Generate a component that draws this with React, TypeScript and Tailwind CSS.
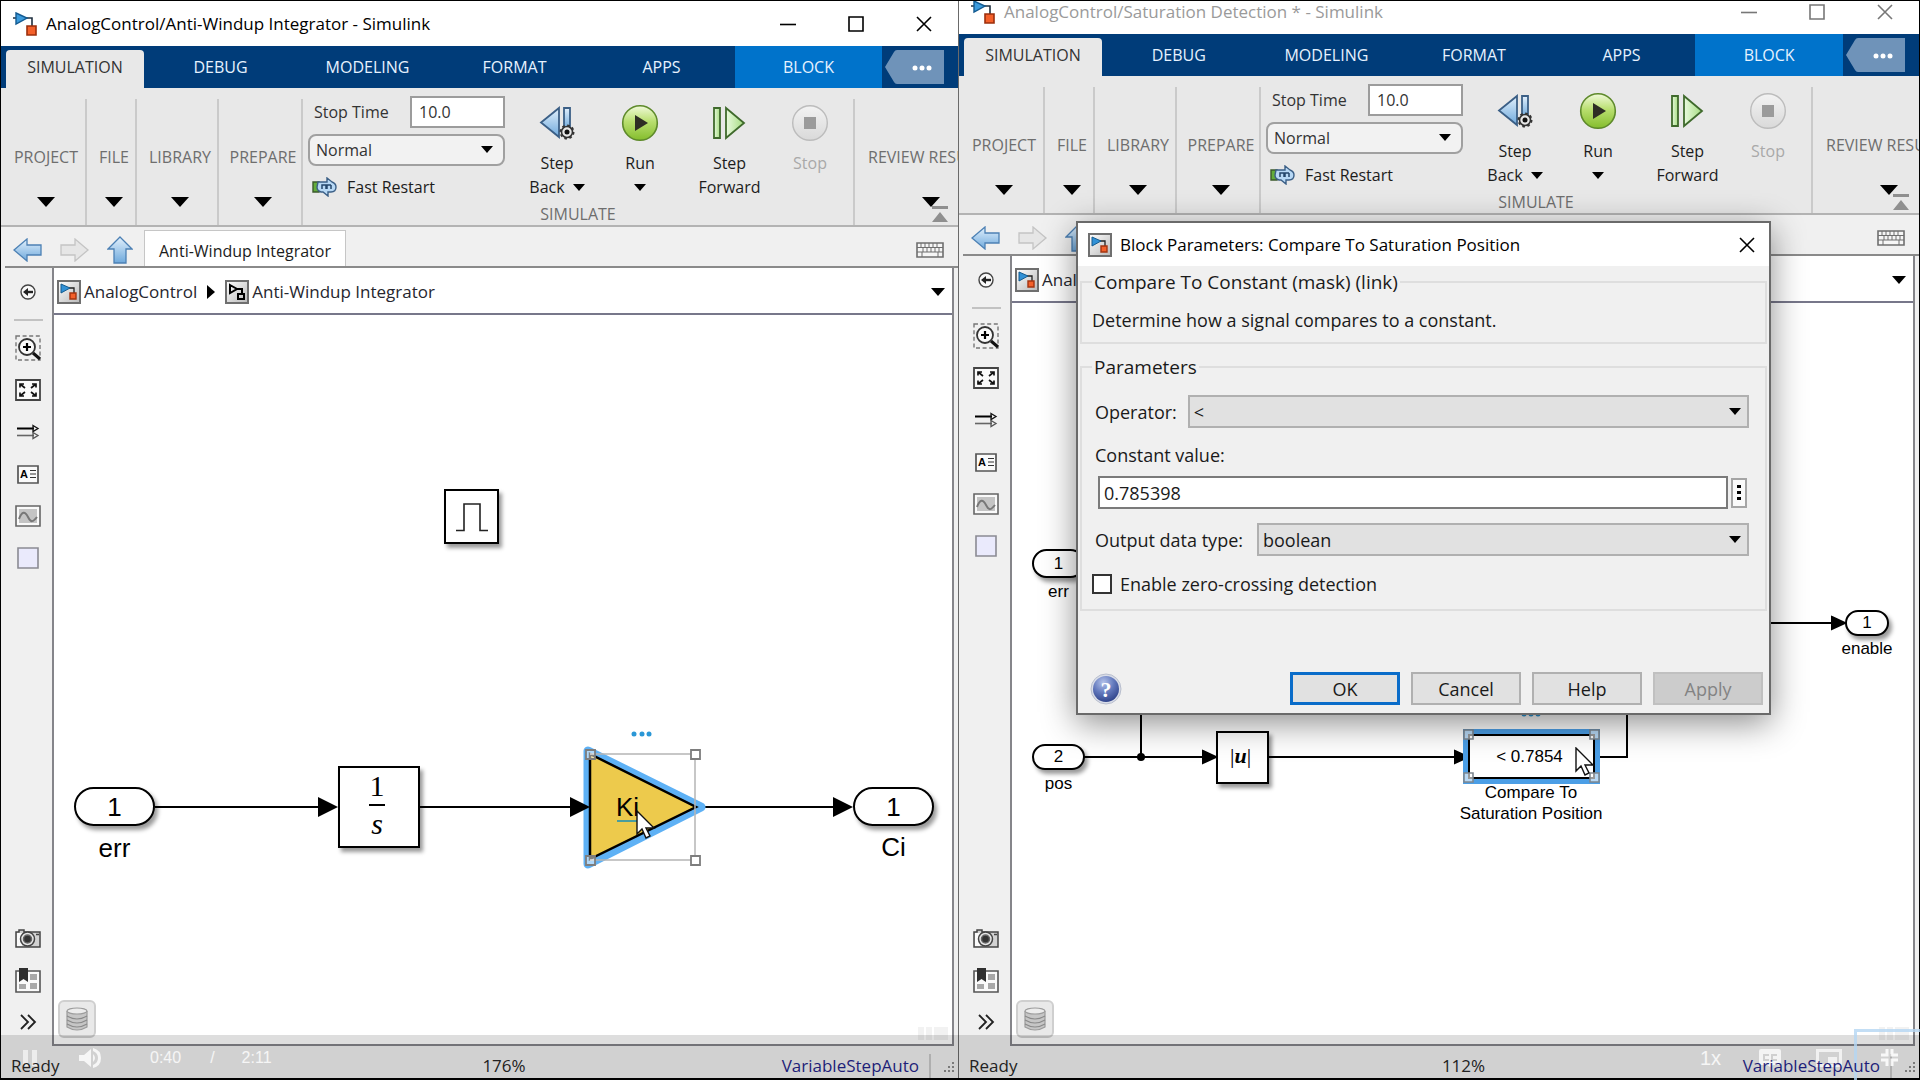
import type { ReactNode } from "react";

const UI = "font-['Open_Sans','Noto_Sans',sans-serif]";
const ARIAL = "font-['Liberation_Sans',Arial,sans-serif]";
const TIMES = "font-['Liberation_Serif','Times_New_Roman',serif]";

const TABS = ["DEBUG", "MODELING", "FORMAT", "APPS"];

/* ---------- icons ---------- */

function Gradients() {
  return (
    <svg className="absolute h-0 w-0" aria-hidden="true">
      <defs>
        <linearGradient id="blue" x1="0" y1="0" x2="0" y2="1">
          <stop offset="0" stopColor="#e2f0fc" />
          <stop offset="1" stopColor="#6ea9dc" />
        </linearGradient>
        <linearGradient id="grey" x1="0" y1="0" x2="0" y2="1">
          <stop offset="0" stopColor="#f3f3f3" />
          <stop offset="1" stopColor="#d9d9d9" />
        </linearGradient>
        <linearGradient id="green" x1="0" y1="0" x2="0" y2="1">
          <stop offset="0" stopColor="#f1fadb" />
          <stop offset="0.45" stopColor="#b9df70" />
          <stop offset="1" stopColor="#84bd2c" />
        </linearGradient>
        <linearGradient id="paleGreen" x1="0" y1="0" x2="1" y2="0">
          <stop offset="0" stopColor="#e9fadf" />
          <stop offset="1" stopColor="#a5dc80" />
        </linearGradient>
        <linearGradient id="box" x1="0" y1="0" x2="1" y2="1">
          <stop offset="0" stopColor="#ffffff" />
          <stop offset="1" stopColor="#b9b9b9" />
        </linearGradient>
        <radialGradient id="help" cx="0.4" cy="0.25" r="0.8">
          <stop offset="0" stopColor="#b4c3ea" />
          <stop offset="0.5" stopColor="#6379bd" />
          <stop offset="1" stopColor="#2b3f86" />
        </radialGradient>
      </defs>
    </svg>
  );
}

function SimulinkIcon() {
  return (
    <svg width="24" height="24" viewBox="0 0 24 24">
      <path d="M0 6h4M13 6h6v8" fill="none" stroke="#1f2f3f" strokeWidth="1.6" />
      <path d="M3 1l11 5-11 6z" fill="#3c9bdc" stroke="#125a91" strokeWidth="1.4" />
      <path d="M14 14h9v9h-9z" fill="#f4602a" stroke="#9c2f0c" strokeWidth="1.6" />
    </svg>
  );
}

function ModelIcon() {
  return (
    <svg width="24" height="24" viewBox="0 0 24 24" className="shrink-0">
      <path d="M1 1h22v22H1z" fill="url(#box)" stroke="#6f6f6f" strokeWidth="2" />
      <path d="M12 8h5v5" fill="none" stroke="#222" strokeWidth="1.3" />
      <path d="M4 4l9 4-9 5z" fill="#3191d6" stroke="#155b8e" />
      <path d="M13 13h6v6h-6z" fill="#f4602a" stroke="#a33410" strokeWidth="1.4" />
    </svg>
  );
}

function SubsystemIcon() {
  return (
    <svg width="24" height="24" viewBox="0 0 24 24" className="shrink-0">
      <path d="M1 1h22v22H1z" fill="url(#box)" stroke="#6f6f6f" strokeWidth="2" />
      <path d="M12 9h5v5M5 5l7 4-7 4zM13 14h6v5h-6z" fill="none" stroke="#000" strokeWidth="2" />
    </svg>
  );
}

function Caret({ small = false }: { small?: boolean }) {
  return small ? (
    <svg width="12" height="7" viewBox="0 0 12 7" className="shrink-0">
      <path d="M0 0h12L6 7z" />
    </svg>
  ) : (
    <svg width="18" height="10" viewBox="0 0 18 10" className="shrink-0">
      <path d="M0 0h18L9 10z" />
    </svg>
  );
}

function StepBackIcon() {
  return (
    <svg width="36" height="36" viewBox="0 0 36 36">
      <path d="M20 3v29L2 17.500z" fill="url(#blue)" stroke="#3b5f86" strokeWidth="1.8" />
      <path d="M25 3h6v21h-6z" fill="url(#blue)" stroke="#3b5f86" strokeWidth="1.8" />
      <circle cx="28" cy="27" r="5.500" fill="#e8e8e8" stroke="#333" strokeWidth="1.600" />
      <circle cx="28" cy="27" r="6.600" fill="none" stroke="#333" strokeWidth="1.800" strokeDasharray="2.600 2.580" />
      <circle cx="28" cy="27" r="2.500" fill="#111" />
    </svg>
  );
}

function RunIcon() {
  return (
    <svg width="38" height="38" viewBox="0 0 38 38">
      <circle cx="19" cy="19" r="17.300" fill="url(#green)" stroke="#5e8a2b" strokeWidth="1.600" />
      <path d="M14 11l13 8-13 8z" fill="#2d2d24" />
    </svg>
  );
}

function StepForwardIcon() {
  return (
    <svg width="34" height="36" viewBox="0 0 34 36">
      <path d="M1 3h6v30H1z" fill="url(#paleGreen)" stroke="#3f6a2c" strokeWidth="1.800" />
      <path d="M13 3v30l18-15z" fill="url(#paleGreen)" stroke="#3f6a2c" strokeWidth="1.800" />
    </svg>
  );
}

function StopIcon() {
  return (
    <svg width="38" height="38" viewBox="0 0 38 38">
      <circle cx="19" cy="19" r="17.300" fill="url(#grey)" stroke="#bcbcbc" strokeWidth="1.400" />
      <path d="M13 13h12v12H13z" fill="#9b9b9b" />
    </svg>
  );
}

function RestartIcon() {
  return (
    <svg width="25" height="20" viewBox="0 0 25 20">
      <path d="M1 5h6v10H1z" fill="#63ad3b" stroke="#3b5a2c" strokeWidth="1.400" />
      <path d="M6 5h9V1l5 4c3 1 4 3 4 5 0 3-2 5-5 5h-3v4l-5-4H9c-3-1-4-3-4-5z" fill="#b7d8f5" stroke="#3b5f86" strokeWidth="1.400" />
      <path d="M10 12V8h4v4M15 12V8h4M19 8v4" fill="none" stroke="#24466b" strokeWidth="1.500" />
    </svg>
  );
}

function Arrow({ dir }: { dir: "left" | "right" | "up" }) {
  if (dir === "up") {
    return (
      <svg width="26" height="28" viewBox="0 0 26 28">
        <path d="M13 1l12 12h-6v14H7V13H1z" fill="url(#blue)" stroke="#4c80b4" strokeWidth="1.300" />
      </svg>
    );
  }
  return dir === "left" ? (
    <svg width="29" height="24" viewBox="0 0 29 24">
      <path d="M1 12L14 1v6h14v10H14v6z" fill="url(#blue)" stroke="#4c80b4" strokeWidth="1.300" />
    </svg>
  ) : (
    <svg width="29" height="24" viewBox="0 0 29 24">
      <path d="M28 12L15 1v6H1v10h14v6z" fill="#e6e6e6" stroke="#c4c4c4" strokeWidth="1.300" />
    </svg>
  );
}

function KeyboardIcon() {
  return (
    <svg width="28" height="16" viewBox="0 0 28 16" fill="none" stroke="#6f6f6f">
      <path d="M1 1h26v14H1z" strokeWidth="1.600" fill="#f6f6f6" />
      <path d="M1 5.500h26M1 10h26" />
      <path d="M5 1v4M9 1v4M13 1v4M17 1v4M21 1v4M7 5v5M11 5v5M15 5v5M19 5v5M23 5v5M6 10v5M22 10v5" />
    </svg>
  );
}

const SIDE_TOP: { name: string; icon: ReactNode }[] = [
  {
    name: "Zoom in",
    icon: (
      <svg width="26" height="26" viewBox="0 0 26 26" fill="none">
        <path d="M1 1h24v24H1z" stroke="#777" strokeWidth="1.400" strokeDasharray="4 2.600" />
        <path d="M18 18l7 6" stroke="#111" strokeWidth="3" />
        <circle cx="12" cy="12" r="8" fill="#fafafa" stroke="#333" strokeWidth="1.800" />
        <path d="M12 8v8M8 12h8" stroke="#000" strokeWidth="2.200" />
      </svg>
    ),
  },
  {
    name: "Fit to view",
    icon: (
      <svg width="26" height="22" viewBox="0 0 26 22" fill="none">
        <path d="M1 1h24v20H1z" fill="#fafafa" stroke="#444" strokeWidth="1.800" />
        <path d="M5 8.500V5h4M5 5l5 4M21 8.500V5h-4M21 5l-5 4M5 13.500V17h4M5 17l5-4M21 13.500V17h-4M21 17l-5-4" stroke="#111" strokeWidth="1.700" />
      </svg>
    ),
  },
  {
    name: "Signals",
    icon: (
      <svg width="24" height="16" viewBox="0 0 24 16" fill="none">
        <path d="M1 4.500h17" stroke="#000" strokeWidth="2" />
        <path d="M17 1.500l5 3-5 3z" stroke="#111" strokeWidth="1.300" />
        <path d="M1 11.500h17" stroke="#666" strokeWidth="1.600" />
        <path d="M17 8.500l5 3-5 3z" stroke="#555" strokeWidth="1.300" />
      </svg>
    ),
  },
  {
    name: "Annotation",
    icon: (
      <svg width="22" height="19" viewBox="0 0 22 19" fill="none">
        <path d="M1 1h20v17H1z" fill="#fafafa" stroke="#555" strokeWidth="1.700" />
        <path d="M13 5.500h6M13 9h6M13 12.500h6" stroke="#333" strokeWidth="1.200" />
        <text x="3" y="13" fontSize="11" fontWeight="700" fill="#000" fontFamily="Liberation Sans">A</text>
      </svg>
    ),
  },
  {
    name: "Image",
    icon: (
      <svg width="26" height="22" viewBox="0 0 26 22" fill="none">
        <path d="M1 1h24v20H1z" fill="#fafafa" stroke="#666" strokeWidth="1.600" />
        <path d="M4 4h18v14H4z" fill="#c4c4c4" />
        <path d="M4 14c3-8 6-8 9-2s5 5 9 0" stroke="#777" strokeWidth="2" />
      </svg>
    ),
  },
  {
    name: "Area",
    icon: (
      <svg width="22" height="22" viewBox="0 0 22 22">
        <path d="M1 1h20v20H1z" fill="#eaeafc" stroke="#8b8b93" strokeWidth="1.600" />
      </svg>
    ),
  },
];

const SIDE_BOTTOM: { name: string; icon: ReactNode }[] = [
  {
    name: "Screenshot",
    icon: (
      <svg width="26" height="20" viewBox="0 0 26 20" fill="none">
        <path d="M1 4h3V2h5v2h16v15H1z" fill="#d2d2d2" stroke="#444" strokeWidth="1.500" />
        <path d="M2 5h5v13H2z" fill="#fafafa" />
        <circle cx="12.500" cy="11" r="7" fill="#e6e6e6" stroke="#444" strokeWidth="1.500" />
        <circle cx="12.500" cy="11" r="4" fill="#333" stroke="#666" strokeWidth="1.500" />
        <path d="M21 6.500h3" stroke="#444" strokeWidth="1.500" />
      </svg>
    ),
  },
  {
    name: "Bookmarks",
    icon: (
      <svg width="26" height="26" viewBox="0 0 26 26" fill="none">
        <path d="M1 4h24v21H1z" fill="#fafafa" stroke="#555" strokeWidth="1.600" />
        <path d="M15 7h7v6h-7zM4 17h7v5H4zM15 16h7v6h-7z" fill="#a8a8a8" />
        <path d="M4 1h9v14l-4.500-3L4 15z" fill="#2f2f2f" />
      </svg>
    ),
  },
  {
    name: "More",
    icon: (
      <svg width="18" height="16" viewBox="0 0 18 16" fill="none" stroke="#222" strokeWidth="1.800">
        <path d="M2 1l7 7-7 7M9 1l7 7-7 7" />
      </svg>
    ),
  },
];

function WindowButtons({ active }: { active: boolean }) {
  const color = active ? "#000" : "#777";
  return (
    <div className="ml-auto flex items-center gap-[52px] pr-[26px]">
      <button aria-label="Minimize">
        <svg width="16" height="16" viewBox="0 0 16 16" stroke={color} strokeWidth="1.600">
          <path d="M0 8.500h16" />
        </svg>
      </button>
      <button aria-label="Maximize">
        <svg width="16" height="16" viewBox="0 0 16 16" stroke={color} strokeWidth="1.600" fill="none">
          <path d="M1 1h14v14H1z" />
        </svg>
      </button>
      <button aria-label="Close">
        <svg width="16" height="16" viewBox="0 0 16 16" stroke={color} strokeWidth="1.600">
          <path d="M1 1l14 14M15 1L1 15" />
        </svg>
      </button>
    </div>
  );
}

/* ---------- window parts ---------- */

function TabBar() {
  return (
    <nav className="flex h-[42px] shrink-0 items-stretch bg-[#003c79] pl-[5px] text-base font-medium text-[#e6f2ff]">
      <button className="mt-1 mr-[3px] w-[138px] shrink-0 rounded-t-sm bg-[#e8e8e8] pb-1 font-normal text-[#333]">
        SIMULATION
      </button>
      {TABS.map((tab) => (
        <button key={tab} className="flex-1">
          {tab}
        </button>
      ))}
      <button className="flex-1 bg-[#0073cb]">BLOCK</button>
      <button aria-label="More tabs" className="flex w-[76px] shrink-0 items-center pl-[3px]">
        <svg width="59" height="34" viewBox="0 0 59 34">
          <path d="M0 17L9 2q1-2 3-2h47v34H12q-2 0-3-2z" fill="#6f93b9" />
          <circle cx="30" cy="18" r="2.500" fill="#fff" />
          <circle cx="37" cy="18" r="2.500" fill="#fff" />
          <circle cx="44" cy="18" r="2.500" fill="#fff" />
        </svg>
      </button>
    </nav>
  );
}

function Section({ label, className }: { label: string; className: string }) {
  return (
    <button
      className={`flex h-[126px] shrink-0 flex-col items-center justify-end gap-[28px] pb-[18px] text-base leading-6 whitespace-nowrap text-[#6e6e6e] ${className}`}
    >
      {label}
      <span className="text-black">
        <Caret />
      </span>
    </button>
  );
}

function RibbonButton({ icon, className, children }: { icon: ReactNode; className: string; children: ReactNode }) {
  return (
    <button className={`flex flex-col items-center text-base leading-6 text-[#1c1c1c] ${className}`}>
      <span className="flex h-[42px] items-center">{icon}</span>
      {children}
    </button>
  );
}

function Ribbon({ id }: { id: string }) {
  return (
    <div className="relative flex h-[139px] shrink-0 items-end overflow-hidden border-b-2 border-[#b3b3b3] bg-[#e8e8e8]">
      <Section label="PROJECT" className="w-[86px] border-r-2 border-[#cacaca] pl-[6px]" />
      <Section label="FILE" className="w-[50px] border-r-2 border-[#cacaca] pl-[6px]" />
      <Section label="LIBRARY" className="w-[82px] border-r-2 border-[#cacaca] pl-[6px]" />
      <Section label="PREPARE" className="w-[84px] border-r-2 border-[#cacaca] pl-[6px]" />
      <div className="flex h-[137px] w-[550px] shrink-0 flex-col">
        <div className="flex flex-1 pt-2 pl-[5px]">
          <div className="flex w-[197px] flex-col gap-[6px] text-base text-[#333]">
            <div className="flex h-8 items-center justify-between">
              <label htmlFor={`${id}-stop`} className="pl-[6px]">
                Stop Time
              </label>
              <input
                id={`${id}-stop`}
                defaultValue="10.0"
                className="h-8 w-[95px] border-2 border-[#9c9c9c] bg-white pl-[7px]"
              />
            </div>
            <div className="relative">
              <select
                aria-label="Simulation mode"
                className="h-8 w-full appearance-none rounded-lg border-2 border-[#a0a0a0] bg-[#f2f2f2] pl-[6px]"
              >
                <option>Normal</option>
              </select>
              <span className="pointer-events-none absolute top-3 right-3">
                <Caret small />
              </span>
            </div>
            <button className="flex h-[30px] items-center gap-[10px] pl-1 text-[#1c1c1c]">
              <RestartIcon />
              Fast Restart
            </button>
          </div>
          <div className="flex pt-[6px] pl-[11px]">
            <RibbonButton icon={<StepBackIcon />} className="w-[82px]">
              <span className="pt-[7px]">Step</span>
              <span className="flex items-center gap-2">
                Back <Caret small />
              </span>
            </RibbonButton>
            <RibbonButton icon={<RunIcon />} className="w-[84px]">
              <span className="pt-[7px]">Run</span>
              <span className="flex h-6 items-center">
                <Caret small />
              </span>
            </RibbonButton>
            <RibbonButton icon={<StepForwardIcon />} className="w-[95px]">
              <span className="pt-[7px]">Step</span>
              <span>Forward</span>
            </RibbonButton>
            <RibbonButton icon={<StopIcon />} className="w-[66px]">
              <span className="pt-[7px] text-[#a9a9a9]">Stop</span>
            </RibbonButton>
          </div>
        </div>
        <div className="text-center text-base leading-[22px] text-[#6e6e6e]">SIMULATE</div>
      </div>
      <Section label="REVIEW RESULTS" className="border-l-2 border-[#cacaca] pl-[13px]" />
      <button aria-label="Collapse toolstrip" className="absolute right-[10px] bottom-[3px]">
        <svg width="16" height="16" viewBox="0 0 16 16" fill="#8f8f8f">
          <path d="M0 0h16v3H0zM0 16h16L8 6z" />
        </svg>
      </button>
    </div>
  );
}

function Sidebar() {
  return (
    <aside className="flex w-[51px] shrink-0 flex-col items-center pt-[9px] pb-[3px] pl-[3px]">
      <button aria-label="Hide browser" className="flex h-[30px] items-center">
        <svg width="16" height="16" viewBox="0 0 16 16" fill="none">
          <circle cx="8" cy="8" r="7" fill="#fafafa" stroke="#444" strokeWidth="1.400" />
          <path d="M13 8H6" stroke="#222" strokeWidth="2.400" />
          <path d="M3 8l5-4v8z" fill="#222" />
        </svg>
      </button>
      <hr className="mt-3 mb-[6px] w-[29px] border-t-2 border-[#c2c2c2]" />
      {SIDE_TOP.map((item) => (
        <button key={item.name} aria-label={item.name} className="flex h-[42px] items-center">
          {item.icon}
        </button>
      ))}
      <div className="mt-auto flex flex-col items-center">
        {SIDE_BOTTOM.map((item) => (
          <button key={item.name} aria-label={item.name} className="flex h-[42px] items-center">
            {item.icon}
          </button>
        ))}
      </div>
    </aside>
  );
}

interface ModelWindowProps {
  id: string;
  title: string;
  subsystem?: string;
  zoom: string;
  active?: boolean;
  className: string;
  children: ReactNode;
}

function ModelWindow({ id, title, subsystem, zoom, active = false, className, children }: ModelWindowProps) {
  return (
    <section className={`relative flex min-w-0 flex-col overflow-hidden bg-[#f0f0f0] ${className}`}>
      <header
        className={`flex h-[45px] shrink-0 items-center bg-white pl-3 text-[17px] ${active ? "text-black" : "-mt-3 text-[#9a9a9a]"}`}
      >
        <SimulinkIcon />
        <span className="pl-[9px]">{title}</span>
        <WindowButtons active={active} />
      </header>
      <TabBar />
      <Ribbon id={id} />
      <div className="ml-1 flex h-[41px] shrink-0 items-center border-b-2 border-[#8a8a8a] pt-[7px] pl-2">
        <button aria-label="Back">
          <Arrow dir="left" />
        </button>
        <button aria-label="Forward" className="ml-[18px]">
          <Arrow dir="right" />
        </button>
        <button aria-label="Up to parent" className="ml-[18px]">
          <Arrow dir="up" />
        </button>
        {subsystem && (
          <button className="ml-[11px] h-[36px] shrink-0 self-end border border-b-0 border-[#c6c6c6] bg-white px-[14px] pt-[5px] text-base text-[#1c1c1c]">
            {subsystem}
          </button>
        )}
        <button aria-label="Keyboard shortcuts" className="mr-[14px] ml-auto">
          <KeyboardIcon />
        </button>
      </div>
      <div className="flex flex-1">
        <Sidebar />
        <div className="mr-1 flex min-w-0 flex-1 flex-col border-x-2 border-b-2 border-[#85858a] bg-white">
          <div className="flex h-[47px] shrink-0 items-center border-b-2 border-[#77778a] pt-[2px] pl-[3px] text-[17px] text-[#26262e]">
            <ModelIcon />
            <span className="pl-[3px]">AnalogControl</span>
            {subsystem && (
              <>
                <svg width="8" height="14" viewBox="0 0 8 14" className="mx-[10px]">
                  <path d="M0 0l8 7-8 7z" />
                </svg>
                <SubsystemIcon />
                <span className="pl-[3px]">{subsystem}</span>
              </>
            )}
            <button aria-label="Show all" className="mr-[7px] ml-auto">
              <svg width="14" height="8" viewBox="0 0 14 8">
                <path d="M0 0h14L7 8z" />
              </svg>
            </button>
          </div>
          <div className="relative flex-1 overflow-hidden">
            {children}
            <button
              aria-label="Viewmarks"
              className="absolute bottom-[6px] left-1 flex h-[38px] w-[38px] items-center justify-center rounded-md border-2 border-[#cfcfcf] bg-[#e9e9e9]"
            >
              <svg width="22" height="24" viewBox="0 0 22 24" stroke="#9c9c9c" strokeWidth="1.200">
                <path d="M1 4v16q10 6 20 0V4" fill="#c6c6c6" />
                <ellipse cx="11" cy="4" rx="10" ry="3" fill="#ececec" />
                <path d="M1 9q10 6 20 0M1 13q10 6 20 0M1 17q10 6 20 0" fill="none" stroke="#8a8a8a" />
              </svg>
            </button>
            <svg width="32" height="13" viewBox="0 0 32 13" className="absolute right-[2px] bottom-1" fill="#000" fillOpacity="0.05">
              <path d="M0 0h6v13H0zM8 0h6v13H8zM16 0h14v13H16z" />
            </svg>
          </div>
        </div>
      </div>
      <footer className="flex h-8 shrink-0 items-center text-[17px] text-[#222]">
        <span className="relative z-20 flex-1 pt-3 pb-1 pl-[10px]">Ready</span>
        <span className="relative z-20 pt-3 pb-1 pl-[78px]">{zoom}</span>
        <span className="relative z-20 flex-1 pt-3 pr-[10px] pb-1 text-right text-[#1e1e78]">VariableStepAuto</span>
        <span className="h-6 w-[29px] self-end border-l-2 border-[#c9c9c9] pt-2 pl-3">
          <svg width="12" height="12" viewBox="0 0 12 12" fill="#8d8d8d">
            <path d="M9 0h2v2H9zM9 4h2v2H9zM5 4h2v2H5zM9 8h2v2H9zM5 8h2v2H5zM1 8h2v2H1z" />
          </svg>
        </span>
      </footer>
    </section>
  );
}

/* ---------- diagrams ---------- */

function Port({ n, className }: { n: number; className: string }) {
  return (
    <div
      className={`absolute flex items-center justify-center rounded-full border-2 border-black bg-white shadow-[3px_4px_4px_rgba(0,0,0,0.4)] ${className}`}
    >
      {n}
    </div>
  );
}

function Cursor({ className }: { className: string }) {
  return (
    <svg width="20" height="30" viewBox="0 0 20 30" className={`absolute ${className}`}>
      <path d="M1 1v23l5-5 4 9 4-2-4-8h8z" fill="#fff" stroke="#111" strokeWidth="1.400" />
    </svg>
  );
}

function IntegratorDiagram() {
  return (
    <div className={`text-[26px] leading-8 text-black ${ARIAL}`}>
      <svg width="900" height="728" className="absolute top-0 left-0" fill="none" stroke="#000" strokeWidth="2">
        <path d="M101 492h163M365 492h151M643 492h137" />
        <path d="M264 482l20 10-20 10z" fill="#000" stroke="none" />
        <path d="M534 436v113l113-57z" stroke="#5eb1f5" strokeWidth="9" strokeLinejoin="round" />
        <path d="M516 482l20 10-20 10zM779 482l20 10-20 10z" fill="#000" stroke="none" />
        <path d="M536 439v105l106-52z" fill="#edca4c" strokeWidth="2.500" />
        <path d="M536 439h105v106H536" stroke="#b5b5b5" strokeWidth="1.500" />
        <g stroke="#7d7d7d" strokeWidth="1.800" fill="#fff">
          <path d="M532 435h9v9h-9zM532 541h9v9h-9z" fillOpacity="0.5" />
          <path d="M637 435h9v9h-9zM637 541h9v9h-9z" />
        </g>
        <path d="M563 506h21" stroke="#4a9d9d" />
        <g fill="#2a97d6" stroke="none">
          <circle cx="580" cy="419" r="2.500" />
          <circle cx="588" cy="419" r="2.500" />
          <circle cx="595" cy="419" r="2.500" />
        </g>
      </svg>
      <Port n={1} className="top-[472px] left-5 h-[39px] w-[81px]" />
      <span className="absolute top-[517px] left-5 w-[81px] text-center">err</span>
      <div
        className={`absolute top-[451px] left-[284px] flex h-[82px] w-[82px] flex-col items-center justify-center border-2 border-black bg-white pr-1 pb-1 text-[30px] shadow-[3px_4px_4px_rgba(0,0,0,0.4)] ${TIMES}`}
      >
        <span>1</span>
        <span className="my-[2px] h-[2px] w-4 bg-black" />
        <i>s</i>
      </div>
      <div className="absolute top-[174px] left-[390px] flex h-[55px] w-[55px] items-center justify-center border-2 border-black bg-white shadow-[3px_4px_4px_rgba(0,0,0,0.4)]">
        <svg width="32" height="30" viewBox="0 0 32 30" fill="none" stroke="#222" strokeWidth="1.600">
          <path d="M0 28.500h8V2h16v26.500h8" />
        </svg>
      </div>
      <span className="absolute top-[476px] left-[562px]">Ki</span>
      <Port n={1} className="top-[472px] left-[799px] h-[39px] w-[81px]" />
      <span className="absolute top-[516px] left-[799px] w-[81px] text-center">Ci</span>
      <Cursor className="top-[495px] left-[582px]" />
    </div>
  );
}

function SaturationDiagram() {
  return (
    <div className={`text-[17px] leading-5 text-black ${ARIAL}`}>
      <svg width="902" height="740" className="absolute top-0 left-0" fill="none" stroke="#000" strokeWidth="2">
        <path d="M72 454h119M256 454h187M584 454h31V400M129 454V262M72 262h57M757 320h64" />
        <circle cx="129" cy="454" r="4" fill="#000" stroke="none" />
        <path d="M191 448l13 6-13 6zM443 448l13 6-13 6zM820 314l13 6-13 6z" fill="#000" />
        <g fill="#2a97d6" stroke="none">
          <circle cx="512" cy="411" r="2.500" />
          <circle cx="519" cy="411" r="2.500" />
          <circle cx="526" cy="411" r="2.500" />
        </g>
      </svg>
      <Port n={1} className="top-[246px] left-5 h-[29px] w-[53px]" />
      <span className="absolute top-[279px] left-5 w-[53px] text-center">err</span>
      <Port n={2} className="top-[441px] left-5 h-[26px] w-[53px]" />
      <span className="absolute top-[471px] left-5 w-[53px] text-center">pos</span>
      <div
        className={`absolute top-[428px] left-[204px] flex h-[53px] w-[53px] items-center justify-center border-2 border-black bg-white pr-1 pb-1 text-[22px] shadow-[3px_4px_4px_rgba(0,0,0,0.4)] ${TIMES}`}
      >
        |<b className="italic">u</b>|
      </div>
      <div className="absolute top-[431px] left-[456px] flex h-[45px] w-[127px] items-center justify-center border-2 border-black bg-white pr-1 shadow-[0_0_0_5px_#4b9ee6]">
        &lt; 0.7854
      </div>
      <svg width="140" height="58" className="absolute top-[425px] left-[450px]" fill="#fff" fillOpacity="0.6" stroke="#7d8790" strokeWidth="1.600">
        <path d="M2 2h9v9H2zM128 2h9v9h-9zM2 45h9v9H2zM128 45h9v9h-9z" />
      </svg>
      <span className="absolute top-[479px] left-[430px] w-[178px] text-center leading-[21px]">
        Compare To
        <br />
        Saturation Position
      </span>
      <Port n={1} className="top-[307px] left-[833px] h-[26px] w-[44px]" />
      <span className="absolute top-[336px] left-[825px] w-[60px] text-center">enable</span>
      <Cursor className="top-[444px] left-[563px]" />
    </div>
  );
}

/* ---------- dialog ---------- */

function ComboBox({ id, value }: { id: string; value: string }) {
  return (
    <div className="relative flex-1">
      <select id={id} className="h-[33px] w-full appearance-none border-2 border-[#b0b0b0] bg-[#e1e1e1] pl-1">
        <option>{value}</option>
      </select>
      <span className="pointer-events-none absolute top-[13px] right-2">
        <Caret small />
      </span>
    </div>
  );
}

function BlockParametersDialog() {
  return (
    <div
      role="dialog"
      aria-labelledby="dialog-title"
      className="absolute top-[220px] left-[117px] w-[695px] border-2 border-[#6a6a6a] bg-[#f0f0f0] text-black shadow-[0_8px_32px_rgba(0,0,0,0.45)]"
    >
      <div className="flex h-[43px] items-center bg-white pl-[10px]">
        <ModelIcon />
        <span id="dialog-title" className="pl-2 text-[17px]">
          Block Parameters: Compare To Saturation Position
        </span>
        <button aria-label="Close dialog" className="mr-[14px] ml-auto">
          <svg width="16" height="16" viewBox="0 0 16 16" stroke="#000" strokeWidth="1.600">
            <path d="M1 1l14 14M15 1L1 15" />
          </svg>
        </button>
      </div>
      <div className="px-[2px] pt-1 pb-2 text-lg leading-6 text-[#1a1a1a]">
        <fieldset className="border-2 border-[#dedede] px-[10px] pt-[14px] pb-[10px]">
          <legend className="px-[2px] text-[19px]">Compare To Constant (mask) (link)</legend>
          <p>Determine how a signal compares to a constant.</p>
        </fieldset>
        <fieldset className="mt-[11px] border-2 border-[#dedede] pt-4 pr-4 pb-[13px] pl-[10px]">
          <legend className="px-[2px] text-[19px]">Parameters</legend>
          <div className="flex items-center gap-[11px] pl-[3px]">
            <label htmlFor="operator">Operator:</label>
            <ComboBox id="operator" value="<" />
          </div>
          <label htmlFor="constant" className="mt-[15px] block pl-[3px]">
            Constant value:
          </label>
          <div className="mt-[9px] flex items-center gap-[3px] pl-[6px]">
            <input
              id="constant"
              defaultValue="0.785398"
              className="h-[33px] min-w-0 flex-1 border-2 border-[#7a7a7a] bg-white pl-1"
            />
            <button aria-label="Constant value actions" className="mr-[2px] h-[30px] w-4 border-2 border-[#a5a5a5] bg-[#fafafa] pl-[4px]">
              <svg width="4" height="18" viewBox="0 0 4 18">
                <path d="M0 1h4v3H0zM0 7h4v3H0zM0 13h4v3H0z" />
              </svg>
            </button>
          </div>
          <div className="mt-[14px] flex items-center gap-[14px] pl-[3px]">
            <label htmlFor="output-type">Output data type:</label>
            <ComboBox id="output-type" value="boolean" />
          </div>
          <label className="mt-4 flex items-center gap-2">
            <input type="checkbox" className="h-5 w-5 appearance-none border-2 border-[#333] bg-white" />
            Enable zero-crossing detection
          </label>
        </fieldset>
        <div className="mt-[61px] flex items-center gap-[11px] pr-1">
          <button aria-label="About this block" className="mr-auto pl-[10px]">
            <svg width="32" height="32" viewBox="0 0 32 32">
              <circle cx="16" cy="16" r="15" fill="#d9dde8" stroke="#b9bfce" />
              <circle cx="16" cy="16" r="13" fill="url(#help)" />
              <text x="16" y="24" textAnchor="middle" fontSize="22" fontWeight="700" fill="#fff" fontFamily="Liberation Serif">?</text>
            </svg>
          </button>
          <button className="h-[33px] w-[110px] border-3 border-[#0a6cc9] bg-[#e1e1e1]">OK</button>
          <button className="h-[33px] w-[110px] border-2 border-[#b0b0b0] bg-[#e1e1e1]">Cancel</button>
          <button className="h-[33px] w-[110px] border-2 border-[#b0b0b0] bg-[#e1e1e1]">Help</button>
          <button disabled className="h-[33px] w-[110px] border-2 border-[#c0c0c0] bg-[#cccccc] text-[#838383]">
            Apply
          </button>
        </div>
      </div>
    </div>
  );
}

/* ---------- video player strip ---------- */

function PlayerBar() {
  return (
    <div
      className={`absolute inset-x-0 bottom-0 z-10 flex h-[45px] items-center bg-black/13 pr-[22px] pl-[23px] text-base text-white/80 ${ARIAL}`}
    >
      <button aria-label="Pause">
        <svg width="14" height="16" viewBox="0 0 14 16" fill="#fff" fillOpacity="0.6">
          <path d="M0 0h5v16H0zM9 0h5v16H9z" />
        </svg>
      </button>
      <button aria-label="Mute" className="ml-[42px]">
        <svg width="22" height="20" viewBox="0 0 22 20" fill="#fff" fillOpacity="0.800">
          <path d="M0 7h5l7-6v18l-7-6H0z" />
          <path d="M14 6q4 4 0 8zM14 0q8 2 8 10t-8 10v-3q5-2 5-7t-5-7z" />
        </svg>
      </button>
      <span className="ml-[49px]">0:40</span>
      <span className="ml-[29px]">/</span>
      <span className="ml-[27px]">2:11</span>
      <button aria-label="Playback speed" className="ml-auto text-xl">
        1x
      </button>
      <button aria-label="Captions" className="ml-[38px]">
        <svg width="22" height="18" viewBox="0 0 22 18">
          <path d="M0 2q0-2 2-2h18q2 0 2 2v12q0 2-2 2h-6l-3 2-3-2H2q-2 0-2-2z" fill="#fff" fillOpacity="0.750" />
          <path d="M10 6H5v5h5M18 6h-5v5h5" fill="none" stroke="#d0d0d0" strokeWidth="2" />
        </svg>
      </button>
      <button aria-label="Picture in picture" className="ml-[35px]">
        <svg width="26" height="18" viewBox="0 0 26 18" fill="#fff" fillOpacity="0.700">
          <path d="M0 0h26v18H0zM3 3v12h20V3z" fillRule="evenodd" />
          <path d="M12 8h9v6h-9z" />
        </svg>
      </button>
      <button aria-label="Exit full screen" className="ml-[39px]">
        <svg width="17" height="17" viewBox="0 0 17 17" fill="none" stroke="#fff" strokeOpacity="0.850" strokeWidth="3">
          <path d="M6 0v6H0M11 0v6h6M6 17v-6H0M11 17v-6h6" />
        </svg>
      </button>
      <span className="absolute right-0 bottom-0 h-[51px] w-[66px] border-t-3 border-l-3 border-[#b4d6f3]/80" />
    </div>
  );
}

export default function App() {
  return (
    <main className={`relative flex h-screen overflow-hidden bg-black px-px pt-px pb-[2px] ${UI}`}>
      <Gradients />
      <ModelWindow
        id="integrator"
        title="AnalogControl/Anti-Windup Integrator - Simulink"
        subsystem="Anti-Windup Integrator"
        zoom="176%"
        active
        className="w-[calc(50%-1px)] border-r border-[#6a6a6a]"
      >
        <IntegratorDiagram />
      </ModelWindow>
      <div className="relative flex min-w-0 flex-1">
        <ModelWindow
          id="saturation"
          title="AnalogControl/Saturation Detection * - Simulink"
          zoom="112%"
          className="flex-1"
        >
          <SaturationDiagram />
        </ModelWindow>
        <BlockParametersDialog />
      </div>
      <PlayerBar />
    </main>
  );
}
